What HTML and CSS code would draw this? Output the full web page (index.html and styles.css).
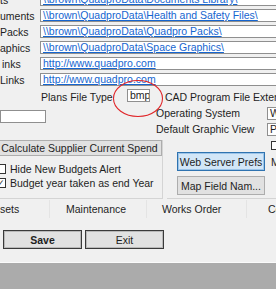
FILE: index.html
```html
<!DOCTYPE html>
<html>
<head>
	<title>System Preferences</title>
	<link rel="stylesheet" href="styles.css">
</head>
<body>
	<div class="window">
		<div class="paths">
			<div class="path-row"><span class="path-label">ts</span><div class="path-box"><a href="#">\\brown\QuadproData\Documents Library\</a></div></div>
			<div class="path-row"><span class="path-label">uments</span><div class="path-box"><a href="#">\\brown\QuadproData\Health and Safety Files\</a></div></div>
			<div class="path-row"><span class="path-label">Packs</span><div class="path-box"><a href="#">\\brown\QuadproData\Quadpro Packs\</a></div></div>
			<div class="path-row"><span class="path-label">aphics</span><div class="path-box"><a href="#">\\brown\QuadproData\Space Graphics\</a></div></div>
			<div class="path-row"><span class="path-label indent">inks</span><div class="path-box"><a href="#">http://www.quadpro.com</a></div></div>
			<div class="path-row"><span class="path-label">Links</span><div class="path-box"><a href="#">http://www.quadpro.com</a></div></div>
		</div>

		<div class="plans-row">
			<span class="plans-label">Plans File Type</span>
			<div class="text-box ext-box">bmp</div>
			<span class="cad-label">CAD Program File Extension</span>
		</div>

		<div class="opt-row">
			<div class="text-box left-box"></div>
			<span class="opt-label first">Operating System</span>
			<div class="text-box opt-box">Windows</div>
		</div>
		<div class="opt-row">
			<span class="opt-label">Default Graphic View</span>
			<div class="text-box opt-box">Plan</div>
		</div>

		<div class="groups">
			<div class="group-left">
				<button class="btn calc-btn">Calculate Supplier Current Spend</button>
				<label class="check-row"><span class="check"></span>Hide New Budgets Alert</label>
				<label class="check-row"><span class="check checked">&#10003;</span>Budget year taken as end Year</label>
			</div>
			<div class="group-right">
				<div class="right-check"><span class="check"></span></div>
				<div class="btn-row">
					<button class="btn side-btn focused">Web Server Prefs</button>
					<span class="side-label">Mail</span>
				</div>
				<button class="btn side-btn map-btn">Map Field Nam...</button>
			</div>
		</div>

		<div class="tabs">
			<div class="tab tab-first">sets</div>
			<div class="tab tab-maint">Maintenance</div>
			<div class="tab tab-works">Works Order</div>
			<div class="tab tab-last">Contracts</div>
		</div>

		<div class="actions">
			<button class="btn action-btn save-btn">Save</button>
			<button class="btn action-btn">Exit</button>
		</div>

		<svg class="mark" width="52" height="40" viewBox="0 0 52 40">
			<ellipse cx="26" cy="19.5" rx="24.5" ry="18" fill="none" stroke="#e0262a" stroke-width="1.1"/>
		</svg>
	</div>
	<div class="footer"></div>
</body>
</html>
```

FILE: styles.css
```css
html, body {
	margin: 0;
	padding: 0;
	width: 276px;
	height: 289px;
	overflow: hidden;
	background-color: #f0f0f0;
	font-family: "Liberation Sans", Arial, sans-serif;
	font-size: 10.5px;
	color: #1e1e1e;
}
.window {
	position: relative;
	height: 262px;
	overflow: hidden;
	border-bottom: 1px solid #fafafa;
}
.paths {
	margin-top: -7px;
}
.path-row {
	display: flex;
	height: 16px;
	white-space: nowrap;
}
.path-label {
	width: 40px;
	line-height: 14px;
	flex-shrink: 0;
}
.path-label.indent {
	padding-left: 2px;
	width: 38px;
}
.path-box {
	flex: 1;
	height: 13px;
	box-sizing: border-box;
	margin-right: -20px;
	border: 1px solid #8f8f8f;
	background-color: white;
	padding-left: 2px;
	line-height: 11px;
	overflow: hidden;
}
.path-box a {
	color: #1565d0;
	text-decoration: underline;
}
.plans-row {
	display: flex;
	align-items: center;
	height: 16px;
	white-space: nowrap;
}
.plans-label {
	margin-left: 41px;
	width: 86px;
	flex-shrink: 0;
}
.text-box {
	height: 13px;
	box-sizing: border-box;
	border: 1px solid #8f8f8f;
	background-color: white;
	line-height: 11px;
	padding-left: 2px;
	overflow: hidden;
	flex-shrink: 0;
}
.ext-box {
	width: 23px;
	margin-top: -3px;
}
.cad-label {
	margin-left: 15px;
}
.opt-row {
	display: flex;
	align-items: center;
	height: 16px;
	white-space: nowrap;
}
.left-box {
	width: 46px;
	align-self: flex-start;
	margin-top: 5px;
}
.opt-label {
	margin-left: 156px;
	width: 111px;
	flex-shrink: 0;
}
.opt-label.first {
	margin-left: 110px;
}
.opt-box {
	width: 30px;
}
.groups {
	display: flex;
	height: 59px;
	margin-top: 3px;
}
.group-left {
	width: 163px;
	height: 59px;
	box-sizing: border-box;
	flex-shrink: 0;
	border-right: 1px solid #d4d4d4;
	border-bottom: 1px solid #d4d4d4;
	white-space: nowrap;
}
.btn {
	font-family: "Liberation Sans", Arial, sans-serif;
	font-size: 10.5px;
	color: #1e1e1e;
	background-color: #e1e1e1;
	border: 1px solid #adadad;
	padding: 0;
	box-sizing: border-box;
	white-space: nowrap;
}
.calc-btn {
	display: block;
	margin: 0 0 0 -3px;
	width: 165px;
	height: 16px;
}
.check-row {
	display: flex;
	align-items: center;
	height: 14px;
}
.check-row:first-of-type {
	margin-top: 6px;
}
.check {
	width: 10px;
	height: 10px;
	box-sizing: border-box;
	border: 1px solid #333;
	background-color: white;
	margin-left: -4px;
	margin-right: 4px;
	font-size: 9px;
	line-height: 8px;
	text-align: center;
	color: #222;
	flex-shrink: 0;
}
.group-right {
	flex: 1;
	margin-left: 4px;
	padding-left: 10px;
	height: 59px;
	box-sizing: border-box;
	border-bottom: 1px solid #d4d4d4;
}
.right-check {
	height: 12px;
	padding-top: 1px;
	box-sizing: border-box;
	display: flex;
}
.right-check .check {
	margin-left: 94px;
	width: 9px;
	height: 9px;
}
.btn-row {
	display: flex;
	align-items: center;
	white-space: nowrap;
}
.side-btn {
	display: block;
	width: 88px;
	height: 19px;
	flex-shrink: 0;
}
.focused {
	background-color: #d2e6f7;
	border: 1px solid #2f73b0;
	box-shadow: inset 0 0 0 1px #9cc4e8;
}
.side-label {
	margin-left: 6px;
}
.map-btn {
	margin-top: 5px;
}
.tabs {
	display: flex;
	height: 18px;
	margin-top: 1px;
	white-space: nowrap;
	line-height: 18px;
}
.tab {
	box-sizing: border-box;
	border-right: 1px solid #e4e4e4;
	flex-shrink: 0;
}
.tab-first {
	width: 50px;
}
.tab-maint {
	width: 97px;
	padding-left: 16px;
}
.tab-works {
	width: 100px;
	padding-left: 15px;
}
.tab-last {
	padding-left: 21px;
	border-right: none;
}
.actions {
	display: flex;
	gap: 3px;
	margin: 12px 0 0 3px;
}
.action-btn {
	width: 79px;
	height: 19px;
	border: 1px solid #3a3a3a;
	box-shadow: inset 0 0 0 1px #b9b9b9;
	background-color: #e1e1e1;
}
.save-btn {
	font-weight: bold;
}
.mark {
	position: absolute;
	left: 112px;
	top: 79px;
}
.footer {
	height: 27px;
	background-color: #ababab;
}
```
